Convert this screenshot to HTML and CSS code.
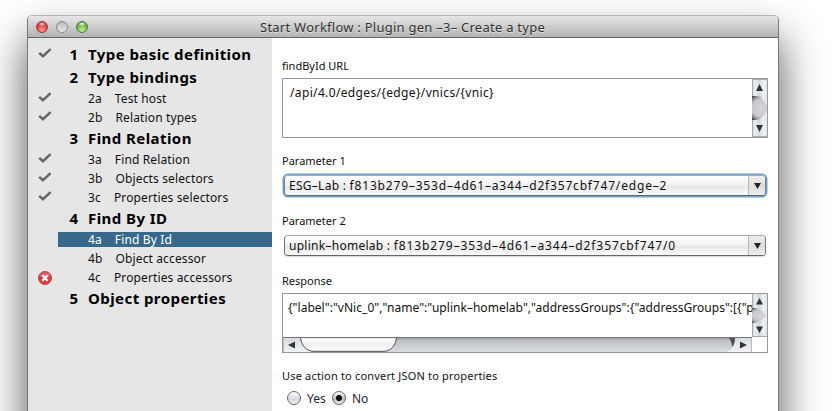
FILE: index.html
```html
<!DOCTYPE html>
<html lang="en">
<head>
<meta charset="utf-8">
<title>Start Workflow</title>
<link rel="stylesheet" href="styles.css">
</head>
<body>
<svg width="0" height="0" class="defs" aria-hidden="true">
  <defs>
    <symbol id="check" viewBox="0 0 14 10"><path d="M1.2 4.900 L4.900 8.2 L12.6 1.2" fill="none" stroke="#666" stroke-width="2.5"/></symbol>
    <linearGradient id="track" x1="0" x2="1" y1="0" y2="0"><stop offset="0" stop-color="#c9cbce"/><stop offset=".2" stop-color="#eceff1"/><stop offset=".5" stop-color="#d3d8de"/><stop offset=".75" stop-color="#eef1f3"/><stop offset="1" stop-color="#e3e6e9"/></linearGradient>
    <linearGradient id="groove" x1="0" x2="0" y1="0" y2="1"><stop offset="0" stop-color="#8e9094"/><stop offset=".25" stop-color="#bfc2c7"/><stop offset="1" stop-color="#d9dbe1"/></linearGradient>
    <linearGradient id="thumb" x1="0" x2="0" y1="0" y2="1"><stop offset="0" stop-color="#e2e2e2"/><stop offset=".25" stop-color="#fff"/><stop offset=".45" stop-color="#f0f0f0"/><stop offset="1" stop-color="#fff"/></linearGradient>
    <linearGradient id="button" x1="0" x2="0" y1="0" y2="1"><stop offset="0" stop-color="#d5d9dd"/><stop offset=".4" stop-color="#e0e4e8"/><stop offset="1" stop-color="#f0f2f4"/></linearGradient>
    <radialGradient id="well" gradientUnits="userSpaceOnUse" cx="9" cy="0" r="15"><stop offset="0" stop-color="#d4d6dc"/><stop offset=".6" stop-color="#c6c8cd"/><stop offset=".8" stop-color="#85878a"/><stop offset="1" stop-color="#2c2d2f"/></radialGradient>
  </defs>
</svg>
<div class="window">
  <header class="titlebar">
    <div class="lights"><i class="light red"></i><i class="light gray"></i><i class="light green"></i></div>
    <h1>Start Workflow : Plugin gen –3– Create a type</h1>
  </header>
  <div class="content">
    <nav class="steps">
      <div class="group"><svg class="mark"><use href="#check"/></svg><b class="num">1</b><b class="name">Type basic definition</b></div>
      <div class="group"><b class="num">2</b><b class="name">Type bindings</b></div>
      <div class="step"><svg class="mark"><use href="#check"/></svg><p><span>2a</span>Test host</p></div>
      <div class="step"><svg class="mark"><use href="#check"/></svg><p><span>2b</span>Relation types</p></div>
      <div class="group"><b class="num">3</b><b class="name">Find Relation</b></div>
      <div class="step"><svg class="mark"><use href="#check"/></svg><p><span>3a</span>Find Relation</p></div>
      <div class="step"><svg class="mark"><use href="#check"/></svg><p><span>3b</span>Objects selectors</p></div>
      <div class="step"><svg class="mark"><use href="#check"/></svg><p><span>3c</span>Properties selectors</p></div>
      <div class="group"><b class="num">4</b><b class="name">Find By ID</b></div>
      <div class="step selected"><p><span>4a</span>Find By Id</p></div>
      <div class="step"><p><span>4b</span>Object accessor</p></div>
      <div class="step"><svg class="error" viewBox="0 0 14 14"><circle cx="7" cy="7" r="6.500" fill="#d93b3f" stroke="#b9474a"/><path d="M1.500 5.500a5.700 5.700 0 0 1 11 0z" fill="#e8797b" opacity=".6"/><path d="M4.300 4.300l5.400 5.400M9.700 4.300L4.300 9.700" stroke="#fff" stroke-width="2.200"/></svg><p><span>4c</span>Properties accessors</p></div>
      <div class="group"><b class="num">5</b><b class="name">Object properties</b></div>
    </nav>
    <main class="form">
      <section>
        <label>findById URL</label>
        <div class="area">
          <div class="text url">/api/4.0/edges/{edge}/vnics/{vnic}</div>
          <svg class="vbar" width="15" height="58" viewBox="0 0 15 58"><path d="M0 0h15v58H0z" fill="url(#track)"/><path d="M.5 .5h15M.5 0v58M0 57.500h15" stroke="#aaa" fill="none"/><g transform="translate(0 29)"><path d="M0-12h3c6 0 9 4 12 10v4c-3 6-6 10-12 10H0z" fill="url(#well)"/></g><path d="M7.500 5l3.500 7h-7zM7.500 53l3.500-7h-7z" fill="#333"/></svg>
        </div>
      </section>
      <section>
        <label>Parameter 1</label>
        <div class="combo focus"><span class="value">ESG–Lab : <span class="id one">f813b279–353d–4d61–a344–d2f357cbf747/edge–2</span></span><span class="drop"><svg width="7" height="6"><path d="M0 0h7L3.500 6z" fill="#222"/></svg></span></div>
      </section>
      <section>
        <label>Parameter 2</label>
        <div class="combo"><span class="value">uplink–homelab : <span class="id">f813b279–353d–4d61–a344–d2f357cbf747/0</span></span><span class="drop"><svg width="7" height="6"><path d="M0 0h7L3.500 6z" fill="#222"/></svg></span></div>
      </section>
      <section>
        <label>Response</label>
        <div class="area response">
          <div class="text json">{"label":"vNic_0","name":"uplink–homelab","addressGroups":{"addressGroups":[{"p</div>
          <svg class="vbar" width="15" height="43" viewBox="0 0 15 43"><path d="M0 0h15v43H0z" fill="url(#track)"/><path d="M.5 0v43M0 42.500h15" stroke="#aaa" fill="none"/><g transform="translate(0 21.500) scale(1 .65)"><path d="M0-11.500c7 0 11 5 14 11.500c-3 6-7 11.500-14 11.500z" fill="url(#well)"/></g><path d="M7.500 4l3.500 6.500h-7zM7.500 39l3.500-6.500h-7z" fill="#333"/></svg>
          <svg class="hbar" width="469" height="15" viewBox="0 0 469 15"><path d="M0 0h469v15H0z" fill="url(#groove)"/><path d="M0 0h28v15H0z" fill="url(#button)"/><path d="M17.500 0C18 8 23 14.300 31 14.300h70C108 14.300 113 8 113.500 0z" fill="url(#thumb)" stroke="#4d4d4d"/><path d="M452 0h17v15H443c7-3 9-7 9-15z" fill="url(#button)"/><path d="M445 0h7c0 5-1 8-3 10c0-4-1-7-4-10z" fill="#4c4d50"/><path d="M0 .5h469" stroke="#777"/><path d="M.5 1v14M468.500 1v14" stroke="#bbb"/><path d="M12 4.500v7l-7-3.500zM457 4.500v7l7-3.500z" fill="#333"/></svg>
        </div>
      </section>
      <section>
        <label class="question">Use action to convert JSON to properties</label>
        <div class="radios"><i class="radio"></i><span class="yes">Yes</span><i class="radio on"></i><span>No</span></div>
      </section>
    </main>
  </div>
</div>
</body>
</html>
```
FILE: styles.css
```css
* { box-sizing: border-box; }
html, body { height: 411px; overflow: hidden; }
body { margin: 0; padding: 15px 58px 0 27px; background: #fff; color: #111; font-family: "Noto Sans", "Open Sans", sans-serif; }
svg { display: block; flex: none; }
.defs { position: absolute; }
.window { height: 480px; border: 1px solid #777; border-radius: 5px 5px 0 0; border-top-color: #b5b5b5; box-shadow: 0 24px 44px rgba(0,0,0,.68); overflow: hidden; background: #fff; }
.titlebar { display: grid; grid-template-columns: 232px 1fr; align-items: center; height: 22px; background: linear-gradient(#e6e6e6, #b3b3b3); border-bottom: 1px solid #666; }
.titlebar h1 { margin: 0; font-size: 13px; line-height: 20px; font-weight: 400; color: #333; letter-spacing: .25px; white-space: nowrap; text-shadow: 0 1px rgba(255,255,255,.5); }
.lights { display: flex; gap: 8px; padding-left: 8px; }
.light { width: 12px; height: 12px; border-radius: 50%; border: 1px solid #777; }
.red { background: radial-gradient(ellipse 4px 2px at 50% 20%, #ffd5d2, transparent), radial-gradient(circle at 50% 80%, #ff9b91, #d9363a 65%); border-color: #8e3b3b; }
.gray { background: linear-gradient(#bbb, #e8e8e8); border-color: #8b8b8b; }
.green { background: radial-gradient(ellipse 4px 2px at 50% 20%, #f1ffe6, transparent), radial-gradient(circle at 50% 80%, #c3f48d, #67aa43 65%); border-color: #4d7838; }
.content { display: flex; height: 457px; }
.steps { width: 244px; flex: none; padding-top: 5px; background: #e6e6e6; }
.group, .step { display: grid; grid-template-columns: 30px 1fr; align-items: center; }
.group { height: 23px; grid-template-columns: 30px 20px 1fr; column-gap: 0; font-size: 15px; line-height: 23px; color: #000; }
.num { grid-column: 2; text-align: right; }
.name { grid-column: 3; padding-left: 10px; white-space: nowrap; letter-spacing: .43px; }
.step { height: 19px; font-size: 12px; }
.step p { grid-column: 2; margin: 0; height: 15px; line-height: 15px; padding-left: 30px; white-space: nowrap; letter-spacing: .13px; }
.step span { margin-right: 13px; }
.selected p { background: #38698a; color: #fff; }
.mark { width: 14px; height: 10px; margin: -3px 0 0 10px; grid-row: 1; }
.error { width: 14px; height: 14px; margin-left: 10px; grid-row: 1; }
.form { width: 506px; padding: 21px 10px 0; display: grid; grid-template-rows: 95px 60px 60px 95px 60px; align-content: start; }
label { display: block; height: 19px; line-height: 14px; font-size: 11px; color: #111; }
.question { letter-spacing: .18px; }
.area { height: 60px; border: 1px solid #999; display: grid; grid-template-columns: 1fr 15px; }
.response { grid-template-rows: 43px 15px; }
.text { padding: 6px 0 0 7px; font-size: 12px; line-height: 16px; white-space: nowrap; overflow: hidden; min-width: 0; }
.url { letter-spacing: .35px; }
.json { padding-left: 5px; letter-spacing: .03px; }
.combo { display: flex; margin: 2px 2px 0; height: 21px; border: 1px solid #777; border-top-color: #aaa; border-bottom-color: #666; border-radius: 4px; background: linear-gradient(#fff, #f3f3f3 45%, #e7e7e7 55%, #fbfbfb); box-shadow: 0 1px 1px rgba(0,0,0,.15); }
.focus { box-shadow: 0 0 0 1.5px #6ba3dc; }
.value { flex: 1; padding-left: 4px; font-size: 12px; line-height: 19px; white-space: nowrap; letter-spacing: .27px; }
.id { letter-spacing: .9px; }
.one { letter-spacing: .82px; }
.drop { width: 17px; border-left: 1px solid #bbb; border-radius: 0 3px 3px 0; display: flex; align-items: center; justify-content: center; background: linear-gradient(#eee, #ddd 55%, #eee); }
.radios { display: flex; align-items: center; height: 20px; padding-left: 5px; font-size: 12px; color: #1b2733; }
.radio { width: 14px; height: 14px; border: 1px solid #666; border-radius: 50%; background: linear-gradient(#fff, #d5d8e2 60%, #f5f5fa); margin-right: 6px; }
.yes { width: 25px; }
.on { background: radial-gradient(circle, #111 2.7px, transparent 3.400px), linear-gradient(#fff, #bbb 60%, #eee); }
```
